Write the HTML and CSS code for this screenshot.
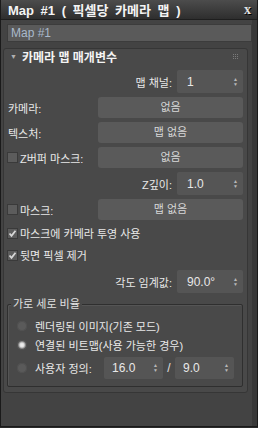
FILE: index.html
```html
<!DOCTYPE html>
<html lang="ko">
<head>
  <meta charset="UTF-8">
  <title>Map #1</title>
  <link rel="stylesheet" href="styles.css">
</head>
<body>
  <div class="window">
    <div class="titlebar">
      <span class="title">Map #1 ( 픽셀당 카메라 맵 )</span>
      <span class="close">x</span>
    </div>
    <div class="frame">
      <div class="main">
        <div class="name-field">Map #1</div>

        <div class="rollout">
          <div class="rollout-head">
            <span class="arrow">▼</span>
            <span class="rollout-title">카메라 맵 매개변수</span>
            <svg class="grip" width="6" height="6" viewBox="0 0 6 6">
              <g fill="#7a7a7a">
                <rect x="0" y="0" width="1" height="1"/><rect x="2" y="0" width="1" height="1"/><rect x="4" y="0" width="1" height="1"/>
                <rect x="0" y="2" width="1" height="1"/><rect x="2" y="2" width="1" height="1"/><rect x="4" y="2" width="1" height="1"/>
                <rect x="0" y="4" width="1" height="1"/><rect x="2" y="4" width="1" height="1"/><rect x="4" y="4" width="1" height="1"/>
              </g>
            </svg>
          </div>

          <div class="rollout-body">
            <div class="row right">
              <span class="label">맵 채널:</span>
              <div class="spinner"><span>1</span><span class="arrows">▲<br>▼</span></div>
            </div>
            <div class="row">
              <span class="label">카메라:</span>
              <div class="button">없음</div>
            </div>
            <div class="row">
              <span class="label">텍스처:</span>
              <div class="button">맵 없음</div>
            </div>
            <div class="row">
              <span class="label-group"><span class="checkbox"></span><span class="label">Z버퍼 마스크:</span></span>
              <div class="button">없음</div>
            </div>
            <div class="row right">
              <span class="label">Z깊이:</span>
              <div class="spinner"><span>1.0</span><span class="arrows">▲<br>▼</span></div>
            </div>
            <div class="row">
              <span class="label-group"><span class="checkbox"></span><span class="label">마스크:</span></span>
              <div class="button">맵 없음</div>
            </div>
            <div class="row check">
              <span class="checkbox checked"><svg width="9" height="9" viewBox="0 0 9 9"><polyline points="1.5,4.5 3.5,6.8 7.5,1.8" fill="none" stroke="#d8d8d8" stroke-width="1.8"/></svg></span>
              <span class="label">마스크에 카메라 투영 사용</span>
            </div>
            <div class="row check">
              <span class="checkbox checked"><svg width="9" height="9" viewBox="0 0 9 9"><polyline points="1.5,4.5 3.5,6.8 7.5,1.8" fill="none" stroke="#d8d8d8" stroke-width="1.8"/></svg></span>
              <span class="label">뒷면 픽셀 제거</span>
            </div>
            <div class="row right angle">
              <span class="label">각도 임계값:</span>
              <div class="spinner"><span>90.0°</span><span class="arrows">▲<br>▼</span></div>
            </div>

            <fieldset class="group">
              <legend>가로 세로 비율</legend>
              <div class="radio-row">
                <span class="radio"></span>
                <span class="label">렌더링된 이미지(기존 모드)</span>
              </div>
              <div class="radio-row">
                <span class="radio selected"></span>
                <span class="label">연결된 비트맵(사용 가능한 경우)</span>
              </div>
              <div class="radio-row custom">
                <span class="radio"></span>
                <span class="label custom-label">사용자 정의:</span>
                <div class="spinner small"><span>16.0</span><span class="arrows">▲<br>▼</span></div>
                <span class="slash">/</span>
                <div class="spinner small"><span>9.0</span><span class="arrows">▲<br>▼</span></div>
              </div>
            </fieldset>
          </div>
        </div>
      </div>
      <div class="edge"></div>
    </div>
  </div>
</body>
</html>
```

FILE: styles.css
```css
body {
  margin: 0;
  background: #2a2a2a;
  font-family: "Liberation Sans", "Noto Sans CJK KR", sans-serif;
  font-size: 11px;
  color: #e8e8e8;
}

.window {
  width: 258px;
  height: 427px;
  box-sizing: border-box;
  border: 1px solid #1a1a1a;
  border-top: 0;
  background: #434343;
  display: flex;
  flex-direction: column;
}

.titlebar {
  height: 19px;
  flex-shrink: 0;
  border-bottom: 1px solid #1e1e1e;
  background: linear-gradient(#4c4c4c, #2e2e2e);
  display: flex;
  align-items: center;
  justify-content: space-between;
  padding: 0 6px 0 7px;
}

.title {
  font-weight: bold;
  font-size: 13px;
  word-spacing: 3px;
  color: #f4f4f4;
}

.close {
  font-family: "Liberation Serif", serif;
  font-weight: bold;
  font-size: 14px;
  color: #e0e0e0;
  text-shadow: 1px 1px 0 #000;
  line-height: 14px;
}

.frame {
  flex: 1;
  display: flex;
}

.main {
  flex: 1;
  padding-top: 4px;
}

.edge {
  width: 5px;
  background: #383838;
}

.name-field {
  margin-left: 6px;
  height: 18px;
  box-sizing: border-box;
  background: #5a5a5a;
  border: 1px solid #3c3c3c;
  color: #a9b9cb;
  padding-left: 3px;
  font-size: 12px;
  line-height: 16px;
}

.rollout {
  margin: 6px 4px 0 2px;
  border: 1px solid #363636;
  border-radius: 3px;
  background: #494949;
}

.rollout-head {
  height: 15px;
  display: flex;
  align-items: center;
  padding: 0 8px 0 6px;
}

.arrow {
  width: 12px;
  font-size: 7px;
  color: #b0b0b0;
}

.rollout-title {
  flex: 1;
  font-weight: bold;
  font-size: 12px;
  color: #f4f4f4;
}

.rollout-body {
  padding: 6px 4px 5px 4px;
  display: flex;
  flex-direction: column;
  gap: 4px;
}

.row {
  display: flex;
  align-items: center;
  justify-content: space-between;
  height: 21px;
}

.row.right {
  justify-content: flex-end;
  gap: 5px;
  height: 23px;
}

.row.check {
  justify-content: flex-start;
  gap: 2px;
  height: 18px;
}

.row.angle {
  margin-top: 2px;
}

.label {
  white-space: nowrap;
}

.label-group {
  display: flex;
  align-items: center;
  gap: 2px;
}

.button {
  width: 145px;
  height: 21px;
  box-sizing: border-box;
  background: #5a5a5a;
  border-radius: 3px;
  text-align: center;
  line-height: 21px;
  color: #d8d8d8;
}

.spinner {
  width: 66px;
  height: 23px;
  box-sizing: border-box;
  background: #555555;
  border-radius: 2px;
  display: flex;
  align-items: center;
  justify-content: space-between;
  padding: 0 5px 0 10px;
  font-size: 12px;
  color: #e8e8e8;
}

.spinner.small {
  width: 59px;
  height: 22px;
  padding-left: 8px;
}

.arrows {
  font-size: 5px;
  line-height: 5px;
  color: #b8b8b8;
  text-align: center;
}

.checkbox {
  width: 11px;
  height: 11px;
  box-sizing: border-box;
  background: #5c5c5c;
  border: 1px solid #3a3a3a;
  margin-left: -1px;
  display: flex;
  align-items: center;
  justify-content: center;
}

.group {
  margin: 0 0 0 -1px;
  border: 1px solid #2f2f2f;
  border-radius: 2px;
  padding: 5px 8px 7px 9px;
  box-shadow: inset 1px 1px 0 #555555;
}

.group legend {
  padding: 0 2px;
  margin-left: -6px;
  line-height: 14px;
  color: #e0e0e0;
  background: #494949;
}

.radio-row {
  display: flex;
  align-items: center;
  gap: 8px;
  height: 19px;
}

.radio-row.custom {
  margin-top: 3px;
  height: 22px;
}

.radio {
  width: 10px;
  height: 10px;
  flex-shrink: 0;
  border-radius: 50%;
  background: #5a5a5a;
  box-shadow: inset 0 0 0 1px #505050;
}

.radio.selected {
  background: radial-gradient(circle, #f4f4f4 0, #e0e0e0 2px, #8a8a8a 3.5px, #5a5a5a 5px);
}

.custom-label {
  width: 61px;
}

.slash {
  width: 12px;
  margin: 0 -8px;
  text-align: center;
  font-size: 12px;
  color: #e0e0e0;
}
```
